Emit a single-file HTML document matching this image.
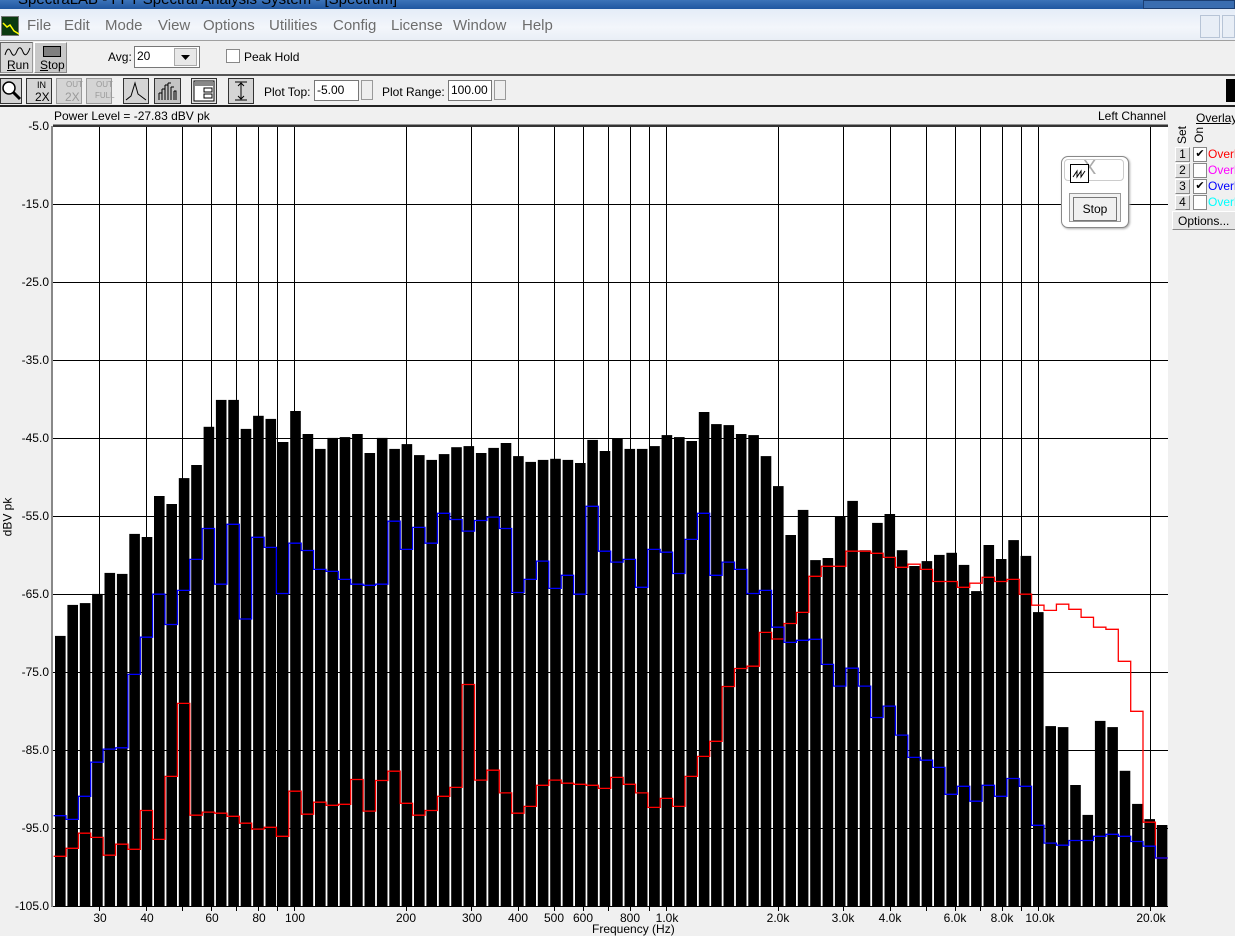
<!DOCTYPE html>
<html><head><meta charset="utf-8">
<style>
*{margin:0;padding:0;box-sizing:border-box}
body{width:1235px;height:928px;overflow:hidden;background:#f0f0f0;font-family:"Liberation Sans",sans-serif;position:relative;font-size:12px;color:#000}
.a{position:absolute}
#title{left:0;top:0;width:1235px;height:9px;background:linear-gradient(#3c73b8,#1f56a0);overflow:hidden}
#title span{position:absolute;left:18px;top:-9px;font-size:15px;color:#000}
#menu{left:0;top:9px;width:1235px;height:32px;background:linear-gradient(#e4ecf7,#f3f6fb 60%,#e9eef6);border-bottom:1px solid #a0a0a0}
#menu span{position:absolute;top:8px;font-size:15px;color:#6d6d6d}
.btn{background:#c8c8c8;border:1px solid #888;border-top-color:#fff;border-left-color:#fff}
.ic{position:absolute;top:78px;width:25px;height:26px;background:#d4d4d4;border:1px solid #333}
.inp{background:#fff;border:1px solid #777;font-size:12px;padding:2px 2px}
.spin{width:12px;height:20px;border:1px solid #999;background:#eee}
.ylab{position:absolute;right:1186px;font-size:12px;text-align:right;width:45px}
.xlab{position:absolute;top:911px;font-size:12px;transform:translateX(-50%)}
.row{position:absolute;left:1175px;height:15px}
.num{position:absolute;left:0;width:15px;height:15px;background:#e0e0e0;border:1px solid #888;border-top-color:#fff;border-left-color:#fff;font-size:12px;text-align:center;line-height:13px}
.cb{position:absolute;left:18px;top:0;width:14px;height:15px;background:#fff;border:1px solid #888;font-size:11px;line-height:12px;text-align:center}
.ov{position:absolute;left:33px;top:0;font-size:12px}
</style></head><body>
<div id="title" class="a"><span>SpectraLAB - FFT Spectral Analysis System - [Spectrum]</span>
<div class="a" style="left:1143px;top:0;width:92px;height:9px;border:1px solid #1b3e72;background:#3a6db0"></div></div>
<div id="menu" class="a">
<div class="a" style="left:1px;top:7px;width:18px;height:20px;background:#0a3a10;border:1px solid #777"><svg width="18" height="20"><path d="M1 6 L5 10 L8 8 L12 14 L17 17" stroke="#ff0" fill="none" stroke-width="1.5"/></svg></div>
<span style="left:27px">File</span><span style="left:64px">Edit</span><span style="left:105px">Mode</span><span style="left:158px">View</span><span style="left:203px">Options</span><span style="left:269px">Utilities</span><span style="left:333px">Config</span><span style="left:391px">License</span><span style="left:453px">Window</span><span style="left:522px">Help</span>
<div class="a" style="left:1200px;top:6px;width:20px;height:23px;border:1px solid #b7c4d6;background:#e8eef6"></div>
<div class="a" style="left:1222px;top:6px;width:13px;height:23px;border:1px solid #b7c4d6;background:#e8eef6"></div>
</div>
<div class="a" style="left:0;top:42px;width:33px;height:31px;background:#d8d8d8;border:1px solid #999;border-top-color:#666;border-left-color:#666">
<svg class="a" style="left:3px;top:2px" width="28" height="14"><path d="M1 10 Q4 0 7 7 Q10 14 13 6 Q16 -1 19 7 Q22 14 26 3" stroke="#000" fill="none"/></svg>
<span class="a" style="left:6px;top:15px;font-size:12px"><u>R</u>un</span></div>
<div class="a btn" style="left:34px;top:42px;width:33px;height:31px">
<div class="a" style="left:8px;top:3px;width:18px;height:11px;background:#808080;border:1px solid #000"></div>
<span class="a" style="left:5px;top:15px;font-size:12px"><u>S</u>top</span></div>
<span class="a" style="left:108px;top:50px">Avg:</span>
<div class="a inp" style="left:134px;top:46px;width:66px;height:22px">20</div>
<div class="a" style="left:174px;top:48px;width:23px;height:18px;background:#e8e8e8;border:1px solid #aaa"><svg width="22" height="16"><path d="M6 6 L15 6 L10.5 11 Z" fill="#000"/></svg></div>
<div class="a" style="left:226px;top:49px;width:14px;height:14px;background:#fff;border:1px solid #888"></div>
<span class="a" style="left:244px;top:50px">Peak Hold</span>
<div class="a" style="left:0;top:74px;width:1235px;height:2px;background:#555"></div>
<div class="ic" style="left:0;width:22px"><svg width="22" height="24"><circle cx="8" cy="9" r="6" fill="#fff" stroke="#000" stroke-width="1.5"/><path d="M12 13 L19 20" stroke="#000" stroke-width="3"/></svg></div>
<div class="ic" style="left:26px;width:26px;font-size:10px"><span class="a" style="left:10px;top:1px;font-size:9px">IN</span><span class="a" style="left:8px;top:11px;font-size:12px">2X</span></div>
<div class="ic" style="left:56px;width:26px;border-color:#999;color:#999"><span class="a" style="left:9px;top:1px;font-size:8px">OUT</span><span class="a" style="left:8px;top:11px;font-size:12px">2X</span></div>
<div class="ic" style="left:86px;width:26px;border-color:#999;color:#999"><span class="a" style="left:9px;top:1px;font-size:8px">OUT</span><span class="a" style="left:8px;top:12px;font-size:8px">FULL</span></div>
<div class="ic" style="left:123px;width:26px"><svg width="24" height="24"><path d="M2 21 L7 17 L11 4 L14 15 L22 21" stroke="#000" fill="none"/></svg></div>
<div class="ic" style="left:154px;width:27px;background:#c4c4c4"><svg width="25" height="24"><path d="M4 21V14M7 21V10M10 21V6M13 21V4M16 21V8M19 21V12M4 14H7M7 10H10M10 6H13M13 4H16M16 8H19M19 12H21V21" stroke="#000" fill="none"/></svg></div>
<div class="ic" style="left:191px;width:26px;background:#e6e6e6"><svg width="24" height="24"><rect x="2" y="2" width="20" height="20" fill="#fff" stroke="#000"/><rect x="3" y="3" width="18" height="4" fill="#888"/><path d="M12 9H20V13H12ZM12 15H20V19H12Z" fill="none" stroke="#000"/></svg></div>
<div class="ic" style="left:228px;width:26px"><svg width="24" height="24"><path d="M6 3H18M6 21H18M12 4V20M9 7L12 4L15 7M9 17L12 20L15 17" stroke="#000" fill="none"/></svg></div>
<span class="a" style="left:264px;top:85px">Plot Top:</span>
<div class="a inp" style="left:314px;top:80px;width:45px;height:21px">-5.00</div>
<div class="a spin" style="left:361px;top:80px"></div>
<span class="a" style="left:382px;top:85px">Plot Range:</span>
<div class="a inp" style="left:448px;top:80px;width:44px;height:21px">100.00</div>
<div class="a spin" style="left:494px;top:80px"></div>
<div class="a" style="left:1226px;top:79px;width:9px;height:23px;background:#000"></div>
<div class="a" style="left:0;top:105px;width:1235px;height:2px;background:#222"></div>
<span class="a" style="left:54px;top:109px">Power Level = -27.83 dBV pk</span>
<span class="a" style="left:1098px;top:109px">Left Channel</span>
<span class="ylab" style="top:119px">-5.0</span><span class="ylab" style="top:197px">-15.0</span><span class="ylab" style="top:275px">-25.0</span><span class="ylab" style="top:353px">-35.0</span><span class="ylab" style="top:431px">-45.0</span><span class="ylab" style="top:509px">-55.0</span><span class="ylab" style="top:587px">-65.0</span><span class="ylab" style="top:665px">-75.0</span><span class="ylab" style="top:743px">-85.0</span><span class="ylab" style="top:821px">-95.0</span><span class="ylab" style="top:899px">-105.0</span>
<span class="a" style="left:-12px;top:510px;transform:rotate(-90deg);font-size:12px">dBV pk</span>
<svg id="plot" class="a" style="left:0;top:0" width="1235" height="928"></svg>
<span class="xlab" style="left:100px">30</span><span class="xlab" style="left:147px">40</span><span class="xlab" style="left:212px">60</span><span class="xlab" style="left:259px">80</span><span class="xlab" style="left:295px">100</span><span class="xlab" style="left:406px">200</span><span class="xlab" style="left:472px">300</span><span class="xlab" style="left:518px">400</span><span class="xlab" style="left:554px">500</span><span class="xlab" style="left:583px">600</span><span class="xlab" style="left:630px">800</span><span class="xlab" style="left:667px">1.0k</span><span class="xlab" style="left:778px">2.0k</span><span class="xlab" style="left:843px">3.0k</span><span class="xlab" style="left:890px">4.0k</span><span class="xlab" style="left:955px">6.0k</span><span class="xlab" style="left:1002px">8.0k</span><span class="xlab" style="left:1040px">10.0k</span><span class="xlab" style="left:1151px">20.0k</span>
<span class="a" style="left:592px;top:922px">Frequency (Hz)</span>
<div class="a" style="left:1061px;top:156px;width:68px;height:72px;background:#fff;border:1px solid #888;border-radius:7px;box-shadow:1px 1px 2px #aaa">
<div class="a" style="left:2px;top:2px;width:60px;height:22px;border:1px solid #ccc;border-radius:4px"></div>
<span class="a" style="left:21px;top:0px;font-size:20px;color:#aaa">X</span>
<div class="a" style="left:8px;top:7px;width:19px;height:19px;background:#fff;border:1px solid #000"><svg width="17" height="17"><path d="M2 12L6 6V12L10 6V12L14 6" stroke="#000" fill="none"/></svg></div>
<div class="a" style="left:7px;top:36px;width:52px;height:29px;border:1px solid #999;background:#f2f2f2"></div>
<div class="a" style="left:11px;top:40px;width:44px;height:24px;border:1px solid #777;background:#f0f0f0;text-align:center;line-height:22px">Stop</div>
</div>
<span class="a" style="left:1196px;top:111px;text-decoration:underline">Overlay</span>
<span class="a" style="left:1173px;top:128px;transform:rotate(-90deg)">Set</span>
<span class="a" style="left:1191px;top:128px;transform:rotate(-90deg)">On</span>
<div class="row" style="top:147px"><div class="num">1</div><div class="cb">✔</div><span class="ov" style="color:#f00">Overlay</span></div>
<div class="row" style="top:163px"><div class="num">2</div><div class="cb"></div><span class="ov" style="color:#f0f">Overlay</span></div>
<div class="row" style="top:179px"><div class="num">3</div><div class="cb">✔</div><span class="ov" style="color:#00f">Overlay</span></div>
<div class="row" style="top:195px"><div class="num">4</div><div class="cb"></div><span class="ov" style="color:#0ff">Overlay</span></div>
<div class="a btn" style="left:1172px;top:211px;width:70px;height:19px;background:#e6e6e6;padding:2px 5px">Options...</div>
<script>
var T=[627.7,597.7,596,587,566.7,567.7,529,532,492.3,500,475,462.3,425.3,399.3,399.3,427.3,414.7,417.7,440,410,432.3,446.7,436,435.3,432.3,450.7,436,446.7,442,452.7,457.3,451.7,445,444,450.7,445.7,441,453.7,459.3,457.3,456.3,457.3,460.3,438,448.7,436.3,446.7,446.7,444,433.3,435.3,439,411,422.7,423.7,432.3,433.3,453.7,482.7,530,505.7,554.3,552.3,512,497,544.7,518.3,509.7,544.7,560,555.3,549.3,547.3,559,584.3,539.7,553.3,535,550.3,604.7,715,716,772,801,710,716,758.3,790.3,805,810.7];
var B=[801.7,805.3,783,750,737.3,736,665,629,587.3,616.7,583.7,553.7,523.7,577.7,519.7,611.3,532.3,542,586.7,538,545,563.3,565.3,573,577.7,578.7,577.7,516.7,544,522.7,538,509,515,526.3,516,512.7,523.7,585.7,573,555.3,581.7,569,587.3,502.3,545.7,556.3,553.7,580.7,544,546.7,567.3,534.3,509,569,556.3,563.3,586.7,583.7,619.3,634,632,631,655.3,676.3,659,676.3,706.7,695.7,723.7,745.3,748,755,781,773.3,787.7,772.3,783,765.7,773.3,811,828.3,830.3,825.7,825.7,821.7,819.7,821.7,826.7,831.3,842.7];
var R=[841,833.3,818.7,822.7,840,829.3,834.3,796.7,824.7,763.7,693,801.3,798.3,799.3,802.3,809,814.7,813,821.7,778,800.3,788.7,791.7,790.7,766.7,797.3,767.7,758.7,789.7,801.3,796.7,783,774.3,674.7,767.3,757.7,779.7,799.3,792.7,772.3,767.3,770.3,771.3,772.3,775.3,764.7,771.3,779.7,793.7,785,792.7,763.7,744.3,729.7,676.7,659.3,657,624.3,630.7,615.7,605,570,560.3,560.3,545.7,545.7,547.7,551.7,561.3,558.3,563.3,575,575,580.7,576.7,571,575,573,587.3,598,603,597,602,609.7,619.3,621.3,652.3,700.7,808,842.7];
function fx(a){return a.map(function(v){return +(380+(v-380)*1.0331).toFixed(1);});}
T=fx(T);B=fx(B);R=fx(R);
var s='<rect x="53" y="126" width="1115" height="780" fill="#fff"/>';
for(var y=126;y<=906;y+=78)s+='<line x1="53" x2="1168" y1="'+(y+0.5)+'" y2="'+(y+0.5)+'" stroke="#000"/>';
var fr=[30,40,50,60,70,80,90,100,200,300,400,500,600,700,800,900,1000,2000,3000,4000,5000,6000,7000,8000,9000,10000,20000];
fr.forEach(function(f){var x=Math.round(294+372*Math.log10(f/100))+0.5;s+='<line x1="'+x+'" x2="'+x+'" y1="126" y2="911" stroke="#000"/>';});
var P=12.38;
for(var i=0;i<90;i++){var x=55+i*P;s+='<rect x="'+x.toFixed(1)+'" y="'+T[i]+'" width="10.6" height="'+(906-T[i]).toFixed(1)+'" fill="#000"/>';}
function step(a,c){var d='';for(var i=0;i<a.length;i++){var x0=55+i*P-1.4,x1=x0+P;d+=(i?'L':'M')+x0.toFixed(1)+' '+a[i]+'L'+x1.toFixed(1)+' '+a[i];}return '<path d="'+d+'" stroke="'+c+'" stroke-width="1.3" fill="none"/>';}
s+=step(R,'#f00')+step(B,'#00f');
s+='<rect x="51" y="126" width="2" height="781" fill="#888"/><rect x="53" y="124.5" width="1115" height="2.5" fill="#333"/><line x1="53" x2="1168" y1="906.5" y2="906.5" stroke="#000"/>';
document.getElementById('plot').innerHTML=s;
</script>
</body></html>
